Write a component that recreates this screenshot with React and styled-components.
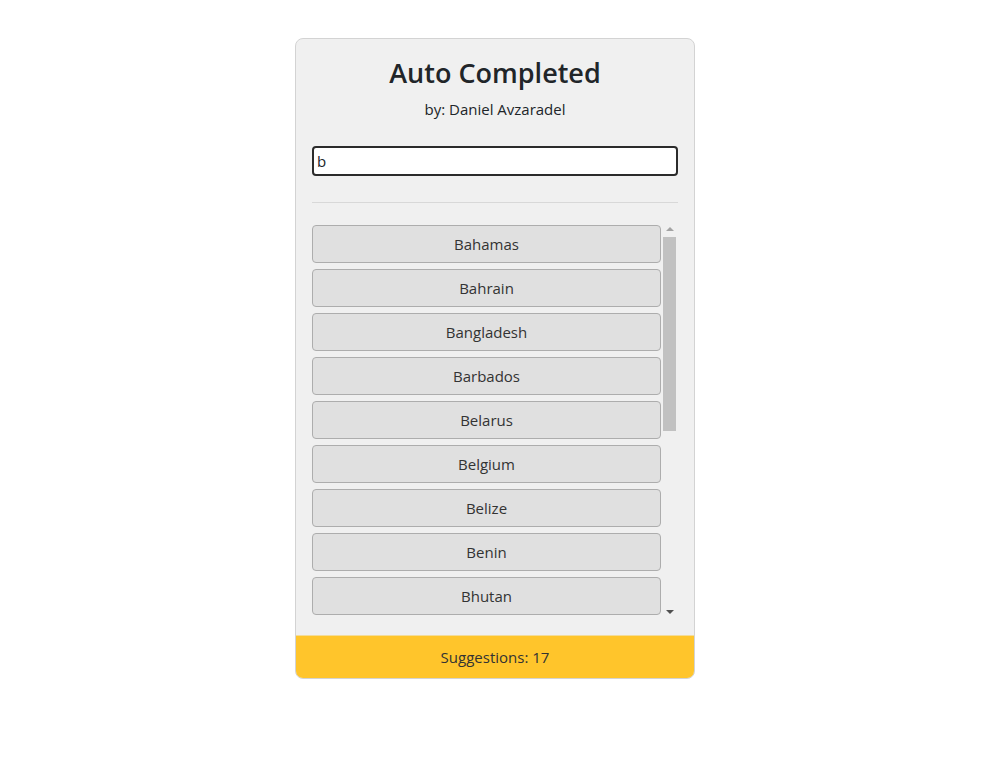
import React, { useState } from 'react'
import styled, { createGlobalStyle } from 'styled-components'

const GlobalStyle = createGlobalStyle`
  body {
    margin: 0;
    background: #fff;
    font-family: "Open Sans", "Noto Sans", sans-serif;
    color: #212529;
  }
`

const Page = styled.div`
  display: flex;
  justify-content: center;
  padding-top: 38px;
`

const Card = styled.div`
  width: 400px;
  box-sizing: border-box;
  background: #f0f0f0;
  border: 1px solid #d3d3d3;
  border-radius: 8px;
  overflow: hidden;
  display: flex;
  flex-direction: column;
`

const Body = styled.div`
  padding: 16px 16px 17px;
`

const Title = styled.h3`
  margin: 1px 0 0;
  text-align: center;
  font-size: 27px;
  font-weight: 600;
  line-height: 34px;
`

const Subtitle = styled.p`
  margin: 7px 0 0;
  text-align: center;
  font-size: 15px;
  line-height: 24px;
`

const Input = styled.input`
  display: block;
  width: 100%;
  box-sizing: border-box;
  margin-top: 25px;
  height: 30px;
  padding: 0 3px;
  border: 2px solid #2b2b2b;
  border-radius: 4px;
  background: #fff;
  font-family: inherit;
  font-size: 15px;
  color: #212529;
  outline: none;
`

const Divider = styled.hr`
  margin: 26px 0 0;
  border: none;
  border-top: 1px solid #d8d8d8;
`

const ListArea = styled.div`
  margin-top: 19px;
  height: 396px;
  display: flex;
`

const List = styled.div`
  flex: 1;
  overflow-y: auto;
  scrollbar-width: none;
  display: flex;
  flex-direction: column;
  gap: 6px;
  padding: 3px 2px 3px 0;
  box-sizing: border-box;
  &::-webkit-scrollbar {
    display: none;
  }
`

const Item = styled.button`
  flex: none;
  height: 38px;
  background: #e0e0e0;
  border: 1px solid #adadad;
  border-radius: 4px;
  font-family: inherit;
  font-size: 15px;
  color: #333;
  text-align: center;
  cursor: pointer;
`

const Scrollbar = styled.div`
  width: 15px;
  display: flex;
  flex-direction: column;
`

const ArrowButton = styled.div`
  height: 15px;
  display: flex;
  align-items: center;
  justify-content: center;
  padding-right: 1px;
  &::after {
    content: '';
    width: 0;
    height: 0;
    border-left: 4px solid transparent;
    border-right: 4px solid transparent;
    ${p => p.$down
      ? `border-top: 4px solid ${p.$color}; margin-top: 2px;`
      : `border-bottom: 4px solid ${p.$color}; margin-bottom: 2px;`}
  }
`

const Track = styled.div`
  flex: 1;
  padding: 0 2px 0 0;
`

const Thumb = styled.div`
  height: 194px;
  background: #c1c1c1;
`

const Footer = styled.div`
  border-top: 1px solid #f3dc9a;
  background: #ffc52b;
  text-align: center;
  padding: 9px 16px;
  font-size: 15px;
  line-height: 24px;
  color: #333;
`

const countries = [
  'Bahamas', 'Bahrain', 'Bangladesh', 'Barbados', 'Belarus', 'Belgium',
  'Belize', 'Benin', 'Bhutan', 'Bolivia', 'Bosnia and Herzegovina',
  'Botswana', 'Brazil', 'Brunei', 'Bulgaria', 'Burkina Faso', 'Burundi'
]

function App() {
  const [value, setValue] = useState('b')

  return (
    <Page>
      <GlobalStyle />
      <Card>
        <Body>
          <Title>Auto Completed</Title>
          <Subtitle>by: Daniel Avzaradel</Subtitle>
          <Input value={value} onChange={e => setValue(e.target.value)} />
          <Divider />
          <ListArea>
            <List>
              {countries.map(c => (
                <Item key={c}>{c}</Item>
              ))}
            </List>
            <Scrollbar>
              <ArrowButton $color="#a3a3a3" />
              <Track>
                <Thumb />
              </Track>
              <ArrowButton $down $color="#505050" />
            </Scrollbar>
          </ListArea>
        </Body>
        <Footer>Suggestions: {countries.length}</Footer>
      </Card>
    </Page>
  )
}

export default App
